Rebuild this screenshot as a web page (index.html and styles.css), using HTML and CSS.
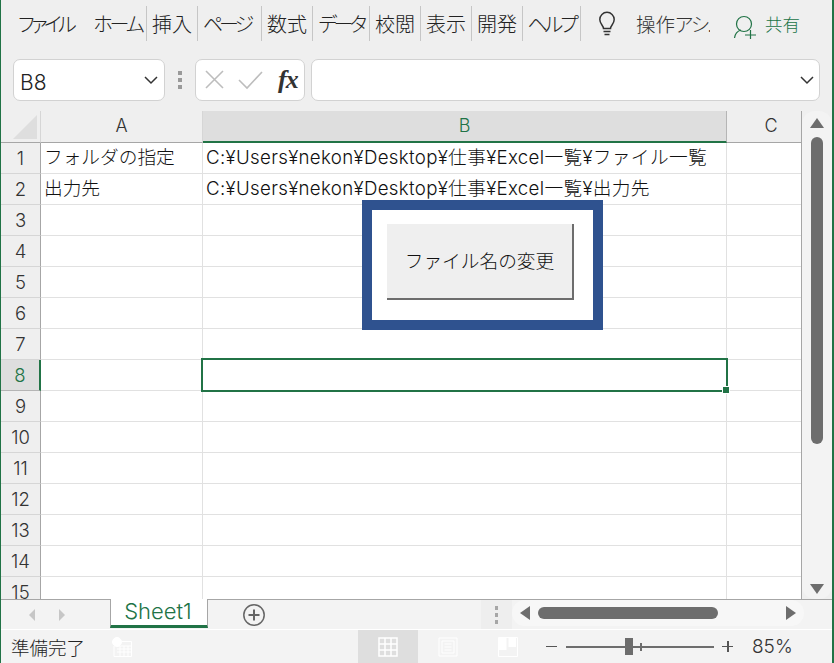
FILE: index.html
```html
<!DOCTYPE html>
<html lang="ja">
<head>
<meta charset="utf-8">
<title>Excel</title>
<link rel="stylesheet" href="styles.css">
</head>
<body>
<div class="app">
  <div class="ribbon">
    <span class="tab t-file">ファイル</span>
    <span class="tab t-home sep">ホーム</span>
    <span class="tab t-ins sep">挿入</span>
    <span class="tab t-page sep">ページ</span>
    <span class="tab t-math sep">数式</span>
    <span class="tab t-data sep">データ</span>
    <span class="tab t-rev sep">校閲</span>
    <span class="tab t-view sep">表示</span>
    <span class="tab t-dev sep">開発</span>
    <span class="tab t-help sep">ヘルプ</span>
    <svg class="bulb" width="20" height="26" viewBox="0 0 20 26" fill="none" stroke="#333" stroke-width="1.5"><path d="M6.5 17.5c0-3-3.700-4.500-3.700-9a7.200 7.200 0 0 1 14.400 0c0 4.500-3.700 6-3.700 9z"/><path d="M6.500 20.500h7M7.500 23.500h5"/></svg>
    <span class="tell">操作<span class="kana">アシ.</span></span>
    <svg class="share-ic" width="24" height="26" viewBox="0 0 24 26" fill="none" stroke="#217346" stroke-width="1.200"><circle cx="11" cy="9" r="7.500"/><path d="M1.500 23c.5-4 3-7 6.500-8M12 20h11M17.500 15v9"/></svg>
    <span class="share">共有</span>
  </div>

  <div class="fbar">
    <div class="box namebox"><span class="nm">B8</span>
      <svg class="chev" width="16" height="10" viewBox="0 0 16 10" fill="none" stroke="#333" stroke-width="1.500"><path d="M2 2l6 6 6-6"/></svg>
    </div>
    <div class="grip"><i></i><i></i><i></i></div>
    <div class="box fxbox">
      <svg width="20" height="20" viewBox="0 0 20 20" fill="none" stroke="#bdbdbd" stroke-width="1.600"><path d="M2 1l17 17M19 1L2 18"/></svg>
      <svg class="chk" width="26" height="20" viewBox="0 0 26 20" fill="none" stroke="#bdbdbd" stroke-width="1.600"><path d="M1 10l8 8L24 2"/></svg>
      <span class="fx">fx</span>
    </div>
    <div class="box input">
      <svg width="16" height="10" viewBox="0 0 16 10" fill="none" stroke="#333" stroke-width="1.500"><path d="M2 2l6 6 6-6"/></svg>
    </div>
  </div>

  <div class="sheetrow">
    <div class="grid">
      <div class="corner"><svg width="24" height="24" viewBox="0 0 24 24"><path d="M24 0v24H0z" fill="#dedede"/></svg></div>
      <div class="colh">A</div><div class="colh sel">B</div><div class="colh lastc">C</div>

      <div class="rowh">1</div><div class="c">フォルダの指定</div><div class="c path">C:¥Users¥nekon¥Desktop¥仕事¥Excel一覧¥ファイル一覧</div><div class="c"></div>
      <div class="rowh">2</div><div class="c">出力先</div><div class="c path">C:¥Users¥nekon¥Desktop¥仕事¥Excel一覧¥出力先</div><div class="c"></div>
      <div class="rowh">3</div><div class="c"></div><div class="c"></div><div class="c"></div>
      <div class="rowh">4</div><div class="c"></div><div class="c"></div><div class="c"></div>
      <div class="rowh">5</div><div class="c"></div><div class="c"></div><div class="c"></div>
      <div class="rowh">6</div><div class="c"></div><div class="c"></div><div class="c"></div>
      <div class="rowh">7</div><div class="c"></div><div class="c"></div><div class="c"></div>
      <div class="rowh selr">8</div><div class="c"></div><div class="c"></div><div class="c"></div>
      <div class="rowh">9</div><div class="c"></div><div class="c"></div><div class="c"></div>
      <div class="rowh">10</div><div class="c"></div><div class="c"></div><div class="c"></div>
      <div class="rowh">11</div><div class="c"></div><div class="c"></div><div class="c"></div>
      <div class="rowh">12</div><div class="c"></div><div class="c"></div><div class="c"></div>
      <div class="rowh">13</div><div class="c"></div><div class="c"></div><div class="c"></div>
      <div class="rowh">14</div><div class="c"></div><div class="c"></div><div class="c"></div>
      <div class="rowh">15</div><div class="c"></div><div class="c"></div><div class="c"></div>

      <div class="frame"><div class="macro">ファイル名の変更</div></div>
      <div class="cursor"><i></i></div>
    </div>
    <div class="vscroll">
      <div class="tri-up"></div>
      <div class="vthumb"></div>
      <div class="tri-down"></div>
    </div>
  </div>

  <div class="tabbar">
    <div class="navs"><div class="nav-l"></div><div class="nav-r"></div></div>
    <div class="sheettab">Sheet1</div>
    <svg class="plus" width="24" height="24" viewBox="0 0 24 24" fill="none" stroke="#666" stroke-width="1.500"><circle cx="12" cy="12" r="10.200"/><path d="M6.500 12h11M12 6.500v11" stroke-width="2"/></svg>
    <div class="hgrip"><i></i><i></i><i></i></div>
    <div class="hscroll">
      <div class="tri-left"></div>
      <div class="hthumb"></div>
      <div class="tri-right"></div>
    </div>
  </div>

  <div class="status">
    <span class="ready">準備完了</span>
    <svg class="macroic" width="20" height="20" viewBox="0 0 20 20" fill="none" stroke="#fff" stroke-width="1"><circle cx="5" cy="5" r="4.500" fill="#fff"/><path d="M2 9v10.500h17.500V4.500H10M5 9h14M5 12h14M5 15h14M8 9v10M12 9v10M16 9v10"/></svg>
    <div class="view on"><svg width="20" height="20" viewBox="0 0 20 20" fill="none" stroke="#fff" stroke-width="1.500"><path d="M1 1h18v18H1zM7 1v18M13 1v18M1 7h18M1 13h18"/></svg></div>
    <div class="view"><svg width="20" height="20" viewBox="0 0 20 20" fill="none" stroke="#fff" stroke-width="1"><path d="M1 1h18v18H1zM4 4h12v12H4zM6.500 7h7M6.500 10h7M6.500 13h7"/></svg></div>
    <div class="view"><svg width="20" height="20" viewBox="0 0 20 20" fill="none" stroke="#fff"><path d="M.5.500h19v19H.500z"/><path d="M1 1h7.500v12H1zM10.500 1H18v9h-7.500z" fill="#fff" stroke="none"/></svg></div>
    <div class="zminus"></div>
    <div class="slider"><span class="tick"></span><span class="knob"></span></div>
    <div class="zplus"></div>
    <span class="pct">85%</span>
  </div>
</div>
</body>
</html>
```
FILE: styles.css
```css
* { box-sizing: border-box; }
html, body { margin: 0; padding: 0; }
body {
  width: 834px; height: 663px; overflow: hidden;
  font-family: "Noto Sans CJK JP", "Noto Sans", sans-serif;
  color: #222;
}
.app {
  width: 834px; height: 663px;
  display: flex; flex-direction: column;
  background: #efefef;
  border-left: 1px solid #217346;
  border-right: 2px solid #217346;
  overflow: hidden;
}

/* ribbon */
.ribbon {
  height: 59px; flex: none;
  display: flex; align-items: flex-start;
  padding: 6px 0 0 17px;
}
.tab {
  height: 35px; line-height: 35px;
  font-size: 20px; font-weight: 300;
  font-feature-settings: "palt";
  white-space: nowrap;
  color: #222;
  flex: none;
}
.kana { letter-spacing: -1.500px; }
.sep { border-right: 1px solid #c6c6c6; text-align: center; }
.t-file { width: 75px; letter-spacing: -3.500px; }
.t-home { width: 54px; padding-right: 4px; letter-spacing: -3px; }
.t-ins { width: 51px; }
.t-page { width: 64px; padding-right: 6px; letter-spacing: -4px; }
.t-math { width: 51px; }
.t-data { width: 57px; letter-spacing: -3.500px; }
.t-rev { width: 51px; }
.t-view { width: 51px; }
.t-dev { width: 51px; }
.t-help { width: 58px; letter-spacing: -3px; }
.bulb { margin: 5px 0 0 16px; flex: none; }
.tell {
  width: 74px; margin-left: 19px; height: 35px; line-height: 35px;
  font-size: 19.500px; font-weight: 300; font-feature-settings: "palt";
  color: #333; overflow: hidden; white-space: nowrap; flex: none;
}
.share-ic { margin: 9px 0 0 23px; flex: none; overflow: visible; }
.share {
  margin-left: 8px; height: 35px; line-height: 35px;
  font-size: 17.500px; font-weight: 300; color: #217346; flex: none;
}

/* formula bar */
.fbar {
  height: 52px; flex: none;
  display: flex; align-items: flex-start;
  padding-left: 12px;
}
.box {
  height: 42px; background: #fff;
  border: 1px solid #d2d2d2; border-radius: 7px;
  display: flex; align-items: center;
}
.namebox { width: 152px; padding: 0 5px 0 6px; justify-content: space-between; }
.nm { font-family: "Inter", sans-serif; font-weight: 300; font-size: 21px; color: #222; padding-top: 5px; }
.grip {
  width: 30px; height: 42px; display: flex; flex-direction: column;
  align-items: center; justify-content: center; gap: 3px;
}
.grip i { width: 4px; height: 4px; background: #9a9a9a; display: block; }
.fxbox { width: 110px; padding-left: 8px; }
.chk { margin-left: 14px; }
.fx {
  margin-left: 14px; font-family: "Liberation Serif", serif;
  font-style: italic; font-weight: bold; font-size: 26px; letter-spacing: -1px; color: #333; line-height: 1;
}
.input { width: 509px; margin-left: 6px; justify-content: flex-end; padding-right: 4px; }

/* sheet */
.sheetrow { height: 488px; flex: none; display: flex; }
.grid {
  position: relative;
  width: 801px; height: 488px; overflow: hidden;
  display: grid;
  grid-template-columns: 40px 162px 524px 75px;
  grid-template-rows: 32px repeat(15, 31px);
  border-right: 1px solid #a6a6a6;
  background: #fff;
}
.corner {
  background: #efefef; border-right: 1px solid #d6d6d6; border-bottom: 1px solid #a6a6a6;
  padding: 4px 0 0 12px;
}
.corner svg { display: block; }
.colh {
  background: #efefef;
  border-bottom: 1px solid #a6a6a6;
  border-right: 1px solid #d6d6d6;
  text-align: center; line-height: 29px;
  font-size: 18px; font-weight: 300; color: #333;
  font-family: "Inter", sans-serif;
}
.colh.lastc { padding-left: 14px; }
.colh.sel {
  background: #dedede; color: #217346;
  border-bottom: 2px solid #217346; border-right-color: #b5b5b5;
}
.rowh {
  background: #efefef;
  border-right: 1px solid #a6a6a6;
  border-bottom: 1px solid #d6d6d6;
  text-align: center; line-height: 31px;
  font-size: 18.500px; font-weight: 300; color: #333;
  font-family: "Inter", sans-serif;
}
.rowh.selr {
  background: #dedede; color: #217346;
  border-right: 2px solid #217346;
  border-bottom-color: #b5b5b5;
}
.c {
  border-right: 1px solid #e1e1e1;
  border-bottom: 1px solid #e1e1e1;
  padding-left: 3px;
  font-family: "Inter", "Noto Sans CJK JP", sans-serif;
  font-size: 18.700px; font-weight: 300; line-height: 29px;
  color: #111; white-space: nowrap;
}
.path { letter-spacing: .32px; }
.frame {
  position: absolute; left: 361px; top: 89px;
  width: 241px; height: 130px;
  background: #fff; border: 10px solid #2f528f;
  padding: 14px 0 0 15px;
}
.macro {
  width: 187px; height: 76px;
  background: #efefef;
  border-right: 2px solid #6d6d6d; border-bottom: 2px solid #6d6d6d;
  text-align: center; line-height: 72px;
  font-size: 18.700px; font-weight: 300; color: #111;
}
.cursor {
  position: absolute; left: 200px; top: 247px;
  width: 527px; height: 34px;
  border: 2px solid #217346;
}
.cursor i {
  position: absolute; right: -4px; bottom: -4px;
  width: 8px; height: 8px; background: #217346; border: 1px solid #fff;
}

/* vertical scrollbar */
.vscroll {
  flex: 1; display: flex; flex-direction: column; align-items: center;
  padding: 7px 0 0 0;
  background: #f3f3f3; border-radius: 13px;
}
.tri-up { width: 0; height: 0; border: 7px solid transparent; border-top: 0; border-bottom: 10px solid #6d6d6d; }
.vthumb { width: 12px; height: 307px; margin-top: 9px; background: #6d6d6d; border-radius: 6px; }
.tri-down { width: 0; height: 0; margin-top: 140px; border: 7px solid transparent; border-bottom: 0; border-top: 10px solid #6d6d6d; }

/* tab bar */
.tabbar {
  height: 31px; flex: none; display: flex; align-items: flex-start;
  background: #f3f3f3;
  border-top: 1px solid #a6a6a6;
  border-bottom: 1px solid #fff;
}
.navs { width: 109px; height: 29px; display: flex; align-items: center; padding: 0 0 0 28px; gap: 24px; flex: none; }
.nav-l { width: 0; height: 0; border: 6px solid transparent; border-left: 0; border-right: 6px solid #c6c6c6; }
.nav-r { width: 0; height: 0; border: 6px solid transparent; border-right: 0; border-left: 6px solid #c6c6c6; }
.sheettab {
  width: 98px; height: 29px; margin-top: -1px; flex: none;
  background: #fff; color: #217346;
  border-left: 1px solid #a6a6a6; border-right: 1px solid #a6a6a6;
  border-bottom: 3px solid #217346;
  text-align: center; line-height: 24px; padding-right: 2px;
  font-family: "Inter", sans-serif; font-size: 22px; font-weight: 300;
}
.plus { margin: 3px 0 0 34px; flex: none; }
.hgrip {
  width: 31px; height: 29px; margin-left: 215px; background: #eeeeee;
  display: flex; flex-direction: column; align-items: center; justify-content: center; gap: 3px; flex: none;
}
.hgrip i { width: 3px; height: 4px; background: #a6a6a6; display: block; }
.hscroll {
  width: 292px; height: 26px; display: flex; align-items: center;
  background: #f7f7f7; padding-left: 8px; flex: none; border-radius: 13px;
}
.tri-left { width: 0; height: 0; border: 7px solid transparent; border-left: 0; border-right: 10px solid #6d6d6d; }
.hthumb { width: 180px; height: 12px; margin-left: 8px; background: #6d6d6d; border-radius: 6px; }
.tri-right { width: 0; height: 0; margin-left: 68px; border: 7px solid transparent; border-right: 0; border-left: 10px solid #6d6d6d; }

/* status bar */
.status {
  flex: 1; display: flex; align-items: center;
  background: #f3f3f3; padding-left: 10px;
}
.ready { width: 101px; font-size: 18.500px; font-weight: 300; color: #222; flex: none; }
.macroic { flex: none; }
.view { width: 60px; height: 100%; display: flex; align-items: center; justify-content: center; flex: none; }
.view.on { background: #dedede; margin-left: 226px; }
.zminus { width: 11px; height: 1.500px; background: #555; margin-left: 8px; flex: none; }
.slider { position: relative; width: 148px; height: 2px; background: #6d6d6d; margin-left: 9px; flex: none; }
.knob { position: absolute; left: 59px; top: -8px; width: 8px; height: 17px; background: #6d6d6d; }
.tick { position: absolute; left: 74px; top: -3px; width: 1.500px; height: 8px; background: #6d6d6d; }
.zplus { position: relative; width: 11px; height: 1.500px; background: #555; margin-left: 8px; flex: none; }
.zplus::after { content: ""; position: absolute; left: 5px; top: -5px; width: 1.500px; height: 11px; background: #555; }
.pct { margin-left: 19px; font-family: "Inter", sans-serif; font-size: 19px; font-weight: 300; color: #333; flex: none; }
```
